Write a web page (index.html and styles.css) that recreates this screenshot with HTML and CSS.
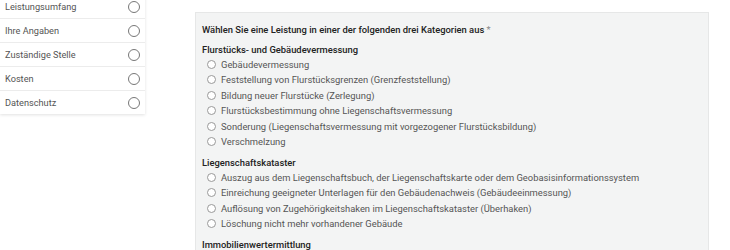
FILE: index.html
```html
<!DOCTYPE html>
<html lang="de">
<head>
    <meta charset="UTF-8">
    <meta name="viewport" content="width=device-width, initial-scale=1.0">
    <title>Leistung wählen</title>
    <link rel="stylesheet" href="styles.css">
</head>
<body>
    <div class="page">
        <div class="steps">
            <div class="step">Leistungsumfang <span class="step-mark"></span></div>
            <div class="step">Ihre Angaben <span class="step-mark"></span></div>
            <div class="step">Zuständige Stelle <span class="step-mark"></span></div>
            <div class="step">Kosten <span class="step-mark"></span></div>
            <div class="step">Datenschutz <span class="step-mark"></span></div>
        </div>
        <div class="panel">
            <div class="question">Wählen Sie eine Leistung in einer der folgenden drei Kategorien aus <span class="required">*</span></div>

            <div class="group">
                <div class="group-title">Flurstücks- und Gebäudevermessung</div>
                <label class="option"><input type="radio" name="leistung"> Gebäudevermessung</label>
                <label class="option"><input type="radio" name="leistung"> Feststellung von Flurstücksgrenzen (Grenzfeststellung)</label>
                <label class="option"><input type="radio" name="leistung"> Bildung neuer Flurstücke (Zerlegung)</label>
                <label class="option"><input type="radio" name="leistung"> Flurstücksbestimmung ohne Liegenschaftsvermessung</label>
                <label class="option"><input type="radio" name="leistung"> Sonderung (Liegenschaftsvermessung mit vorgezogener Flurstücksbildung)</label>
                <label class="option"><input type="radio" name="leistung"> Verschmelzung</label>
            </div>

            <div class="group">
                <div class="group-title">Liegenschaftskataster</div>
                <label class="option"><input type="radio" name="leistung"> Auszug aus dem Liegenschaftsbuch, der Liegenschaftskarte oder dem Geobasisinformationssystem</label>
                <label class="option"><input type="radio" name="leistung"> Einreichung geeigneter Unterlagen für den Gebäudenachweis (Gebäudeeinmessung)</label>
                <label class="option"><input type="radio" name="leistung"> Auflösung von Zugehörigkeitshaken im Liegenschaftskataster (Überhaken)</label>
                <label class="option"><input type="radio" name="leistung"> Löschung nicht mehr vorhandener Gebäude</label>
            </div>

            <div class="group">
                <div class="group-title">Immobilienwertermittlung</div>
            </div>
        </div>
    </div>
</body>
</html>
```

FILE: styles.css
```css
body {
    font-family: Roboto, "Liberation Sans", sans-serif;
    margin: 0;
    padding: 0;
    background-color: #fff;
    color: #444;
    overflow: hidden;
}
.page {
    display: flex;
    align-items: flex-start;
    gap: 50px;
}
.steps {
    width: 145px;
    margin-top: -5px;
    background-color: #fff;
    box-shadow: 0 1px 3px rgba(0, 0, 0, 0.12);
}
.step {
    display: flex;
    align-items: center;
    justify-content: space-between;
    height: 23px;
    padding: 0 5px 0 5px;
    border-bottom: 1px solid #ececec;
    font-size: 9.2px;
    color: #555;
}
.step:last-child {
    border-bottom: none;
}
.step-mark {
    width: 10px;
    height: 10px;
    border: 1px solid #777;
    border-radius: 50%;
}
.panel {
    width: 500px;
    min-height: 260px;
    margin-top: 12px;
    padding: 9px 6px 0 6px;
    background-color: #f3f4f4;
    border: 1px solid #e6e7e7;
}
.question {
    font-size: 9.4px;
    font-weight: 500;
    color: #222;
    line-height: 16px;
}
.required {
    color: #888;
    font-weight: 400;
}
.group {
    margin-top: 3.5px;
}
.group + .group {
    margin-top: 5px;
}
.group-title {
    font-size: 9.4px;
    font-weight: 500;
    color: #222;
    line-height: 15px;
}
.option {
    display: flex;
    align-items: center;
    gap: 5px;
    height: 15.5px;
    padding-left: 5px;
    font-size: 9.4px;
    color: #555;
}
.option input {
    appearance: none;
    margin: 0;
    width: 9px;
    height: 9px;
    border: 1px solid #999;
    border-radius: 50%;
    background-color: #fff;
}
```
